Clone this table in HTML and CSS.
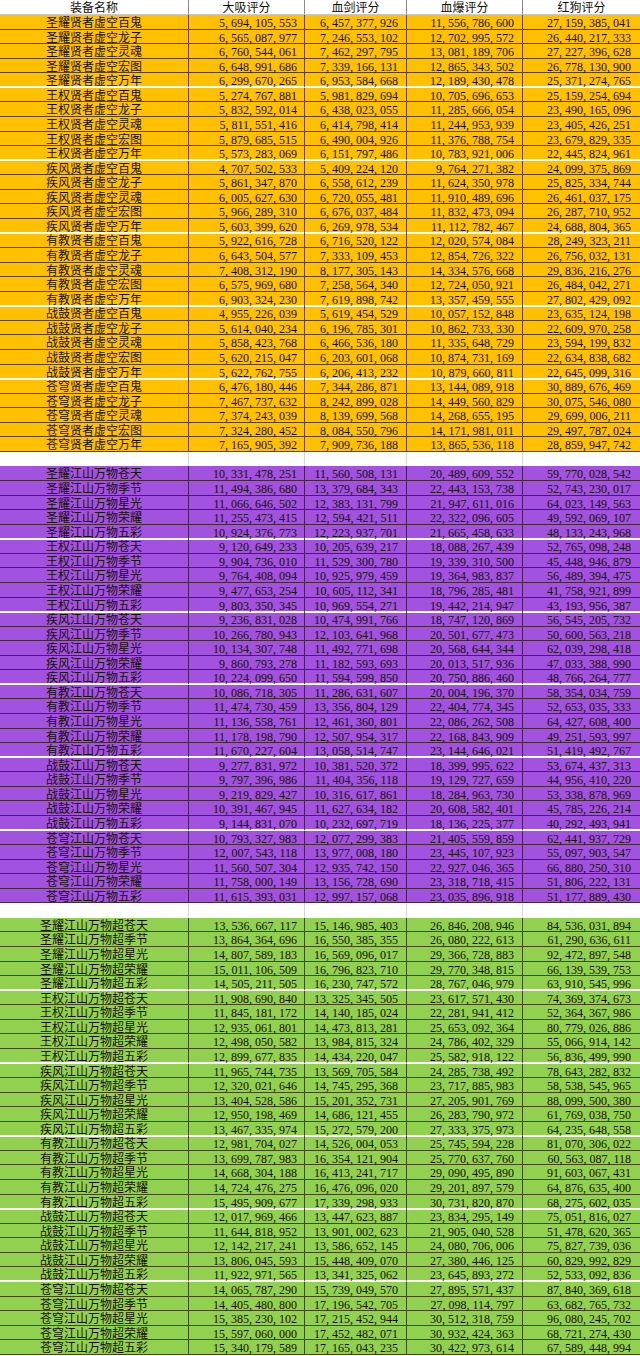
FILE: index.html
```html
<!DOCTYPE html>
<html lang="zh-CN">
<head>
<meta charset="utf-8">
<title>装备评分</title>
<link rel="stylesheet" href="styles.css">
</head>
<body>
<div class="sheet">
  <div class="r head"><span>装备名称</span><span>大吸评分</span><span>血剑评分</span><span>血爆评分</span><span>红狗评分</span></div>

  <div class="sec orange">
    <div class="r"><span>圣耀贤者虚空百鬼</span><span>5, 694, 105, 553</span><span>6, 457, 377, 926</span><span>11, 556, 786, 600</span><span>27, 159, 385, 041</span></div>
    <div class="r"><span>圣耀贤者虚空龙子</span><span>6, 565, 087, 977</span><span>7, 246, 553, 102</span><span>12, 702, 995, 572</span><span>26, 440, 217, 333</span></div>
    <div class="r"><span>圣耀贤者虚空灵魂</span><span>6, 760, 544, 061</span><span>7, 462, 297, 795</span><span>13, 081, 189, 706</span><span>27, 227, 396, 628</span></div>
    <div class="r"><span>圣耀贤者虚空宏图</span><span>6, 648, 991, 686</span><span>7, 339, 166, 131</span><span>12, 865, 343, 502</span><span>26, 778, 130, 900</span></div>
    <div class="r e"><span>圣耀贤者虚空万年</span><span>6, 299, 670, 265</span><span>6, 953, 584, 668</span><span>12, 189, 430, 478</span><span>25, 371, 274, 765</span></div>
    <div class="r"><span>王权贤者虚空百鬼</span><span>5, 274, 767, 881</span><span>5, 981, 829, 694</span><span>10, 705, 696, 653</span><span>25, 159, 254, 694</span></div>
    <div class="r"><span>王权贤者虚空龙子</span><span>5, 832, 592, 014</span><span>6, 438, 023, 055</span><span>11, 285, 666, 054</span><span>23, 490, 165, 096</span></div>
    <div class="r"><span>王权贤者虚空灵魂</span><span>5, 811, 551, 416</span><span>6, 414, 798, 414</span><span>11, 244, 953, 939</span><span>23, 405, 426, 251</span></div>
    <div class="r"><span>王权贤者虚空宏图</span><span>5, 879, 685, 515</span><span>6, 490, 004, 926</span><span>11, 376, 788, 754</span><span>23, 679, 829, 335</span></div>
    <div class="r e"><span>王权贤者虚空万年</span><span>5, 573, 283, 069</span><span>6, 151, 797, 486</span><span>10, 783, 921, 006</span><span>22, 445, 824, 961</span></div>
    <div class="r"><span>疾风贤者虚空百鬼</span><span>4, 707, 502, 533</span><span>5, 409, 224, 120</span><span>9, 764, 271, 382</span><span>24, 099, 375, 869</span></div>
    <div class="r"><span>疾风贤者虚空龙子</span><span>5, 861, 347, 870</span><span>6, 558, 612, 239</span><span>11, 624, 350, 978</span><span>25, 825, 334, 744</span></div>
    <div class="r"><span>疾风贤者虚空灵魂</span><span>6, 005, 627, 630</span><span>6, 720, 055, 481</span><span>11, 910, 489, 696</span><span>26, 461, 037, 175</span></div>
    <div class="r"><span>疾风贤者虚空宏图</span><span>5, 966, 289, 310</span><span>6, 676, 037, 484</span><span>11, 832, 473, 094</span><span>26, 287, 710, 952</span></div>
    <div class="r e"><span>疾风贤者虚空万年</span><span>5, 603, 399, 620</span><span>6, 269, 978, 534</span><span>11, 112, 782, 467</span><span>24, 688, 804, 365</span></div>
    <div class="r"><span>有教贤者虚空百鬼</span><span>5, 922, 616, 728</span><span>6, 716, 520, 122</span><span>12, 020, 574, 084</span><span>28, 249, 323, 211</span></div>
    <div class="r"><span>有教贤者虚空龙子</span><span>6, 643, 504, 577</span><span>7, 333, 109, 453</span><span>12, 854, 726, 322</span><span>26, 756, 032, 131</span></div>
    <div class="r"><span>有教贤者虚空灵魂</span><span>7, 408, 312, 190</span><span>8, 177, 305, 143</span><span>14, 334, 576, 668</span><span>29, 836, 216, 276</span></div>
    <div class="r"><span>有教贤者虚空宏图</span><span>6, 575, 969, 680</span><span>7, 258, 564, 340</span><span>12, 724, 050, 921</span><span>26, 484, 042, 271</span></div>
    <div class="r e"><span>有教贤者虚空万年</span><span>6, 903, 324, 230</span><span>7, 619, 898, 742</span><span>13, 357, 459, 555</span><span>27, 802, 429, 092</span></div>
    <div class="r"><span>战鼓贤者虚空百鬼</span><span>4, 955, 226, 039</span><span>5, 619, 454, 529</span><span>10, 057, 152, 848</span><span>23, 635, 124, 198</span></div>
    <div class="r"><span>战鼓贤者虚空龙子</span><span>5, 614, 040, 234</span><span>6, 196, 785, 301</span><span>10, 862, 733, 330</span><span>22, 609, 970, 258</span></div>
    <div class="r"><span>战鼓贤者虚空灵魂</span><span>5, 858, 423, 768</span><span>6, 466, 536, 180</span><span>11, 335, 648, 729</span><span>23, 594, 199, 832</span></div>
    <div class="r"><span>战鼓贤者虚空宏图</span><span>5, 620, 215, 047</span><span>6, 203, 601, 068</span><span>10, 874, 731, 169</span><span>22, 634, 838, 682</span></div>
    <div class="r e"><span>战鼓贤者虚空万年</span><span>5, 622, 762, 755</span><span>6, 206, 413, 232</span><span>10, 879, 660, 811</span><span>22, 645, 099, 316</span></div>
    <div class="r"><span>苍穹贤者虚空百鬼</span><span>6, 476, 180, 446</span><span>7, 344, 286, 871</span><span>13, 144, 089, 918</span><span>30, 889, 676, 469</span></div>
    <div class="r"><span>苍穹贤者虚空龙子</span><span>7, 467, 737, 632</span><span>8, 242, 899, 028</span><span>14, 449, 560, 829</span><span>30, 075, 546, 080</span></div>
    <div class="r"><span>苍穹贤者虚空灵魂</span><span>7, 374, 243, 039</span><span>8, 139, 699, 568</span><span>14, 268, 655, 195</span><span>29, 699, 006, 211</span></div>
    <div class="r"><span>苍穹贤者虚空宏图</span><span>7, 324, 280, 452</span><span>8, 084, 550, 796</span><span>14, 171, 981, 011</span><span>29, 497, 787, 024</span></div>
    <div class="r"><span>苍穹贤者虚空万年</span><span>7, 165, 905, 392</span><span>7, 909, 736, 188</span><span>13, 865, 536, 118</span><span>28, 859, 947, 742</span></div>
  </div>

  <div class="r blank"><span></span><span></span><span></span><span></span><span></span></div>

  <div class="sec purple">
    <div class="r"><span>圣耀江山万物苍天</span><span>10, 331, 478, 251</span><span>11, 560, 508, 131</span><span>20, 489, 609, 552</span><span>59, 770, 028, 542</span></div>
    <div class="r"><span>圣耀江山万物季节</span><span>11, 494, 386, 680</span><span>13, 379, 684, 343</span><span>22, 443, 153, 738</span><span>52, 743, 230, 017</span></div>
    <div class="r"><span>圣耀江山万物星光</span><span>11, 066, 646, 502</span><span>12, 383, 131, 799</span><span>21, 947, 611, 016</span><span>64, 023, 149, 563</span></div>
    <div class="r"><span>圣耀江山万物荣耀</span><span>11, 255, 473, 415</span><span>12, 594, 421, 511</span><span>22, 322, 096, 605</span><span>49, 592, 069, 107</span></div>
    <div class="r e"><span>圣耀江山万物五彩</span><span>10, 924, 376, 773</span><span>12, 223, 937, 701</span><span>21, 665, 458, 633</span><span>48, 133, 243, 968</span></div>
    <div class="r"><span>王权江山万物苍天</span><span>9, 120, 649, 233</span><span>10, 205, 639, 217</span><span>18, 088, 267, 439</span><span>52, 765, 098, 248</span></div>
    <div class="r"><span>王权江山万物季节</span><span>9, 904, 736, 010</span><span>11, 529, 300, 780</span><span>19, 339, 310, 500</span><span>45, 448, 946, 879</span></div>
    <div class="r"><span>王权江山万物星光</span><span>9, 764, 408, 094</span><span>10, 925, 979, 459</span><span>19, 364, 983, 837</span><span>56, 489, 394, 475</span></div>
    <div class="r"><span>王权江山万物荣耀</span><span>9, 477, 653, 254</span><span>10, 605, 112, 341</span><span>18, 796, 285, 481</span><span>41, 758, 921, 899</span></div>
    <div class="r e"><span>王权江山万物五彩</span><span>9, 803, 350, 345</span><span>10, 969, 554, 271</span><span>19, 442, 214, 947</span><span>43, 193, 956, 387</span></div>
    <div class="r"><span>疾风江山万物苍天</span><span>9, 236, 831, 028</span><span>10, 474, 991, 766</span><span>18, 747, 120, 869</span><span>56, 545, 205, 732</span></div>
    <div class="r"><span>疾风江山万物季节</span><span>10, 266, 780, 943</span><span>12, 103, 641, 968</span><span>20, 501, 677, 473</span><span>50, 600, 563, 218</span></div>
    <div class="r"><span>疾风江山万物星光</span><span>10, 134, 307, 748</span><span>11, 492, 771, 698</span><span>20, 568, 644, 344</span><span>62, 039, 298, 418</span></div>
    <div class="r"><span>疾风江山万物荣耀</span><span>9, 860, 793, 278</span><span>11, 182, 593, 693</span><span>20, 013, 517, 936</span><span>47, 033, 388, 990</span></div>
    <div class="r e"><span>疾风江山万物五彩</span><span>10, 224, 099, 650</span><span>11, 594, 599, 850</span><span>20, 750, 886, 460</span><span>48, 766, 264, 777</span></div>
    <div class="r"><span>有教江山万物苍天</span><span>10, 086, 718, 305</span><span>11, 286, 631, 607</span><span>20, 004, 196, 370</span><span>58, 354, 034, 759</span></div>
    <div class="r"><span>有教江山万物季节</span><span>11, 474, 730, 459</span><span>13, 356, 804, 129</span><span>22, 404, 774, 345</span><span>52, 653, 035, 333</span></div>
    <div class="r"><span>有教江山万物星光</span><span>11, 136, 558, 761</span><span>12, 461, 360, 801</span><span>22, 086, 262, 508</span><span>64, 427, 608, 400</span></div>
    <div class="r"><span>有教江山万物荣耀</span><span>11, 178, 198, 790</span><span>12, 507, 954, 317</span><span>22, 168, 843, 909</span><span>49, 251, 593, 997</span></div>
    <div class="r e"><span>有教江山万物五彩</span><span>11, 670, 227, 604</span><span>13, 058, 514, 747</span><span>23, 144, 646, 021</span><span>51, 419, 492, 767</span></div>
    <div class="r"><span>战鼓江山万物苍天</span><span>9, 277, 831, 972</span><span>10, 381, 520, 372</span><span>18, 399, 995, 622</span><span>53, 674, 437, 313</span></div>
    <div class="r"><span>战鼓江山万物季节</span><span>9, 797, 396, 986</span><span>11, 404, 356, 118</span><span>19, 129, 727, 659</span><span>44, 956, 410, 220</span></div>
    <div class="r"><span>战鼓江山万物星光</span><span>9, 219, 829, 427</span><span>10, 316, 617, 861</span><span>18, 284, 963, 730</span><span>53, 338, 878, 969</span></div>
    <div class="r"><span>战鼓江山万物荣耀</span><span>10, 391, 467, 945</span><span>11, 627, 634, 182</span><span>20, 608, 582, 401</span><span>45, 785, 226, 214</span></div>
    <div class="r e"><span>战鼓江山万物五彩</span><span>9, 144, 831, 070</span><span>10, 232, 697, 719</span><span>18, 136, 225, 377</span><span>40, 292, 493, 941</span></div>
    <div class="r"><span>苍穹江山万物苍天</span><span>10, 793, 327, 983</span><span>12, 077, 299, 383</span><span>21, 405, 559, 859</span><span>62, 441, 937, 729</span></div>
    <div class="r"><span>苍穹江山万物季节</span><span>12, 007, 543, 118</span><span>13, 977, 008, 180</span><span>23, 445, 107, 923</span><span>55, 097, 903, 547</span></div>
    <div class="r"><span>苍穹江山万物星光</span><span>11, 560, 507, 304</span><span>12, 935, 742, 150</span><span>22, 927, 046, 365</span><span>66, 880, 250, 310</span></div>
    <div class="r"><span>苍穹江山万物荣耀</span><span>11, 758, 000, 149</span><span>13, 156, 728, 690</span><span>23, 318, 718, 415</span><span>51, 806, 222, 131</span></div>
    <div class="r"><span>苍穹江山万物五彩</span><span>11, 615, 393, 031</span><span>12, 997, 157, 068</span><span>23, 035, 896, 918</span><span>51, 177, 889, 430</span></div>
  </div>

  <div class="r blank"><span></span><span></span><span></span><span></span><span></span></div>

  <div class="sec green">
    <div class="r"><span>圣耀江山万物超苍天</span><span>13, 536, 667, 117</span><span>15, 146, 985, 403</span><span>26, 846, 208, 946</span><span>84, 536, 031, 894</span></div>
    <div class="r"><span>圣耀江山万物超季节</span><span>13, 864, 364, 696</span><span>16, 550, 385, 355</span><span>26, 080, 222, 613</span><span>61, 290, 636, 611</span></div>
    <div class="r"><span>圣耀江山万物超星光</span><span>14, 807, 589, 183</span><span>16, 569, 096, 017</span><span>29, 366, 728, 883</span><span>92, 472, 897, 548</span></div>
    <div class="r"><span>圣耀江山万物超荣耀</span><span>15, 011, 106, 509</span><span>16, 796, 823, 710</span><span>29, 770, 348, 815</span><span>66, 139, 539, 753</span></div>
    <div class="r e"><span>圣耀江山万物超五彩</span><span>14, 505, 211, 505</span><span>16, 230, 747, 572</span><span>28, 767, 046, 979</span><span>63, 910, 545, 996</span></div>
    <div class="r"><span>王权江山万物超苍天</span><span>11, 908, 690, 840</span><span>13, 325, 345, 505</span><span>23, 617, 571, 430</span><span>74, 369, 374, 673</span></div>
    <div class="r"><span>王权江山万物超季节</span><span>11, 845, 181, 172</span><span>14, 140, 185, 024</span><span>22, 281, 941, 412</span><span>52, 364, 367, 986</span></div>
    <div class="r"><span>王权江山万物超星光</span><span>12, 935, 061, 801</span><span>14, 473, 813, 281</span><span>25, 653, 092, 364</span><span>80, 779, 026, 886</span></div>
    <div class="r"><span>王权江山万物超荣耀</span><span>12, 498, 050, 582</span><span>13, 984, 815, 324</span><span>24, 786, 402, 329</span><span>55, 066, 914, 142</span></div>
    <div class="r e"><span>王权江山万物超五彩</span><span>12, 899, 677, 835</span><span>14, 434, 220, 047</span><span>25, 582, 918, 122</span><span>56, 836, 499, 990</span></div>
    <div class="r"><span>疾风江山万物超苍天</span><span>11, 965, 744, 735</span><span>13, 569, 705, 584</span><span>24, 285, 738, 492</span><span>78, 643, 282, 832</span></div>
    <div class="r"><span>疾风江山万物超季节</span><span>12, 320, 021, 646</span><span>14, 745, 295, 368</span><span>23, 717, 885, 983</span><span>58, 538, 545, 965</span></div>
    <div class="r"><span>疾风江山万物超星光</span><span>13, 404, 528, 586</span><span>15, 201, 352, 731</span><span>27, 205, 901, 769</span><span>88, 099, 500, 380</span></div>
    <div class="r"><span>疾风江山万物超荣耀</span><span>12, 950, 198, 469</span><span>14, 686, 121, 455</span><span>26, 283, 790, 972</span><span>61, 769, 038, 750</span></div>
    <div class="r e"><span>疾风江山万物超五彩</span><span>13, 467, 335, 974</span><span>15, 272, 579, 200</span><span>27, 333, 375, 973</span><span>64, 235, 648, 558</span></div>
    <div class="r"><span>有教江山万物超苍天</span><span>12, 981, 704, 027</span><span>14, 526, 004, 053</span><span>25, 745, 594, 228</span><span>81, 070, 306, 022</span></div>
    <div class="r"><span>有教江山万物超季节</span><span>13, 699, 787, 983</span><span>16, 354, 121, 904</span><span>25, 770, 637, 760</span><span>60, 563, 087, 118</span></div>
    <div class="r"><span>有教江山万物超星光</span><span>14, 668, 304, 188</span><span>16, 413, 241, 717</span><span>29, 090, 495, 890</span><span>91, 603, 067, 431</span></div>
    <div class="r"><span>有教江山万物超荣耀</span><span>14, 724, 476, 275</span><span>16, 476, 096, 020</span><span>29, 201, 897, 579</span><span>64, 876, 635, 400</span></div>
    <div class="r e"><span>有教江山万物超五彩</span><span>15, 495, 909, 677</span><span>17, 339, 298, 933</span><span>30, 731, 820, 870</span><span>68, 275, 602, 035</span></div>
    <div class="r"><span>战鼓江山万物超苍天</span><span>12, 017, 969, 466</span><span>13, 447, 623, 887</span><span>23, 834, 295, 149</span><span>75, 051, 816, 027</span></div>
    <div class="r"><span>战鼓江山万物超季节</span><span>11, 644, 818, 952</span><span>13, 901, 002, 623</span><span>21, 905, 040, 528</span><span>51, 478, 620, 365</span></div>
    <div class="r"><span>战鼓江山万物超星光</span><span>12, 142, 217, 241</span><span>13, 586, 652, 145</span><span>24, 080, 706, 006</span><span>75, 827, 739, 036</span></div>
    <div class="r"><span>战鼓江山万物超荣耀</span><span>13, 806, 045, 593</span><span>15, 448, 409, 070</span><span>27, 380, 446, 125</span><span>60, 829, 992, 829</span></div>
    <div class="r e"><span>战鼓江山万物超五彩</span><span>11, 922, 971, 565</span><span>13, 341, 325, 062</span><span>23, 645, 893, 272</span><span>52, 533, 092, 836</span></div>
    <div class="r"><span>苍穹江山万物超苍天</span><span>14, 065, 787, 290</span><span>15, 739, 049, 570</span><span>27, 895, 571, 437</span><span>87, 840, 369, 618</span></div>
    <div class="r"><span>苍穹江山万物超季节</span><span>14, 405, 480, 800</span><span>17, 196, 542, 705</span><span>27, 098, 114, 797</span><span>63, 682, 765, 732</span></div>
    <div class="r"><span>苍穹江山万物超星光</span><span>15, 385, 230, 102</span><span>17, 215, 452, 944</span><span>30, 512, 318, 759</span><span>96, 080, 245, 702</span></div>
    <div class="r"><span>苍穹江山万物超荣耀</span><span>15, 597, 060, 000</span><span>17, 452, 482, 071</span><span>30, 932, 424, 363</span><span>68, 721, 274, 430</span></div>
    <div class="r"><span>苍穹江山万物超五彩</span><span>15, 340, 179, 589</span><span>17, 165, 043, 235</span><span>30, 422, 973, 614</span><span>67, 589, 448, 994</span></div>
  </div>
</div>
</body>
</html>
```
FILE: styles.css
```css
html, body {
  margin: 0;
  padding: 0;
  background: #ffffff;
}

body {
  font-family: "Liberation Serif", "Noto Sans CJK SC", serif;
  font-size: 12px;
  color: #161008;
}

.sheet {
  width: 640px;
}

.r {
  display: grid;
  grid-template-columns: 189px 116px 102px 116px 117px;
  height: 14.576px;
}

.r > span {
  box-sizing: border-box;
  height: 100%;
  border-right: 1px solid rgba(40, 25, 0, 0.75);
  border-bottom: 1px solid rgba(40, 25, 0, 0.75);
  text-align: right;
  padding: 4px 7px 0 0;
  line-height: 9px;
  white-space: nowrap;
}

.r > span:first-child {
  text-align: center;
  padding: 1px 0 0 0;
  font-family: "Noto Sans CJK SC", sans-serif;
  line-height: 12px;
}

.r > span:nth-child(3),
.r > span:nth-child(4) {
  padding-right: 8px;
}

.r > span:last-child {
  border-right: 0;
  padding-right: 9px;
}

.r.e > span {
  border-bottom: 2px solid #ffffff;
}

.head {
  height: 15px;
  background: #ffffff;
}

.head > span,
.head > span:first-child,
.head > span:nth-child(n) {
  text-align: center;
  padding: 0;
  font-family: "Noto Sans CJK SC", sans-serif;
  line-height: 14px;
  border-right-color: #8c8c8c;
  border-bottom-color: #c8c8c8;
}

.head > span:last-child {
  border-right: 0;
}

.blank > span {
  border-right-color: #d4d4d4;
  border-bottom-color: #ffffff;
}

.orange {
  background: #ffc000;
}

.purple {
  background: #a152de;
}

.green {
  background: #92d050;
}
```
